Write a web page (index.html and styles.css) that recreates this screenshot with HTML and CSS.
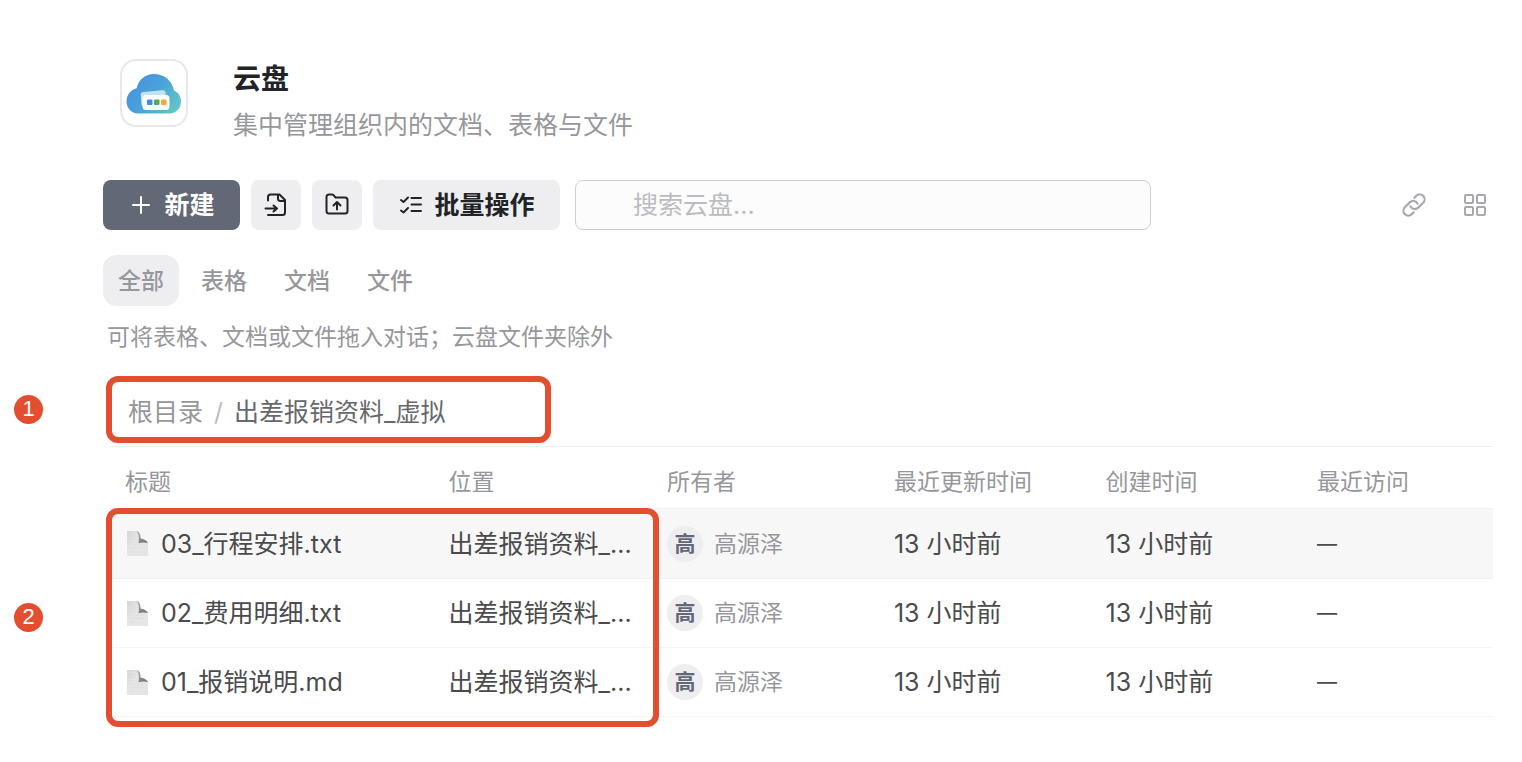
FILE: index.html
```html
<!DOCTYPE html>
<html lang="zh-CN">
<head>
<meta charset="utf-8">
<title>云盘</title>
<link rel="stylesheet" href="styles.css">
</head>
<body>
<svg class="defs" aria-hidden="true">
  <linearGradient id="paper" x1="0" y1="0" x2="1" y2="1"><stop offset="0" stop-color="#d6d6d6"/><stop offset=".4" stop-color="#e6e6e6"/><stop offset="1" stop-color="#e4e4e4"/></linearGradient>
  <linearGradient id="fold" x1="0" y1="0" x2="1" y2="1"><stop offset="0" stop-color="#b8b8b8"/><stop offset=".6" stop-color="#858585"/><stop offset="1" stop-color="#6e6e6e"/></linearGradient>
  <symbol id="file" viewBox="0 0 21 25">
    <path d="M0 0h10.500c2 1.500 2.500 4 2.500 7.500 3.500.3 6.500 1.500 8 4V25H0z" fill="url(#paper)"/>
    <path d="M9.500 0c2.800.6 4.300 3.300 4 7.500 3.200.4 6 1.800 7.500 4.500-2.500-.6-6-.8-9.500.3.900-5.500.4-9.800-2-12.300z" fill="url(#fold)"/>
    <path d="M2 5h7M2 8h7M2 11h8M2 14h16M2 17h15M2 20h5M2 22h4" stroke="#d6d6d6" stroke-width=".4"/>
  </symbol>
</svg>
<main class="page">
  <header class="head">
    <div class="logo">
      <svg viewBox="0 0 56 42" width="56" height="42" aria-hidden="true">
        <defs><linearGradient id="cloud" x1="0" y1=".2" x2="1" y2=".8"><stop offset="0" stop-color="#4590e3"/><stop offset=".5" stop-color="#4ba3d8"/><stop offset="1" stop-color="#62c7c3"/></linearGradient></defs>
        <path d="M12 41.500C5 41.500.500 35.800.500 29.500c0-6.500 4-11.800 10.200-13.300C12.200 7.800 19.500 2 28 2c10 0 18.300 6.500 20 16.500 3.800 1.800 7 5.300 7 11 0 6.800-5 12-11.500 12z" fill="url(#cloud)"/>
        <rect x="15" y="19" width="25" height="15" rx="3" fill="#c4e2f2" transform="rotate(-5 28 26)"/>
        <rect x="16.500" y="23" width="27" height="15" rx="3.500" fill="#fff"/>
        <rect x="21" y="27.500" width="5.500" height="5.500" rx="1" fill="#438be7"/>
        <rect x="28" y="27.500" width="5.500" height="5.500" rx="1" fill="#54a866"/>
        <rect x="35" y="27.500" width="5.500" height="5.500" rx="1" fill="#e9ad42"/>
      </svg>
    </div>
    <div>
      <h1 class="title">云盘</h1>
      <p class="subtitle">集中管理组织内的文档、表格与文件</p>
    </div>
  </header>

  <div class="toolbar">
    <button class="btn primary" type="button">
      <svg viewBox="0 0 18 18" width="18" height="18" aria-hidden="true"><path d="M9 1v16M1 9h16"/></svg>新建
    </button>
    <button class="btn square" type="button" aria-label="导入文件">
      <svg viewBox="0 0 24 24" width="24" height="24" aria-hidden="true"><path d="M4 7.500V4Q4 1.500 6.500 1.500H15.500l5.500 5.500v12.500q0 2.500-2.500 2.500H4M14 1.500V5.500q0 2.500 2.500 2.500h4.500M1.500 15.500h11M9.500 12.500l3.500 3-3.500 3"/></svg>
    </button>
    <button class="btn square" type="button" aria-label="上传文件夹">
      <svg viewBox="0 0 24 24" width="24" height="24" aria-hidden="true"><path d="M1.500 4q0-2.500 2.500-2.500h3q1.300 0 2 1.200L10.500 4.500H20q2.500 0 2.500 2.500v11q0 2.500-2.500 2.500H4q-2.500 0-2.500-2.500zM12 16.500V9.500M8.500 12.500L12 9l3.500 3.500"/></svg>
    </button>
    <button class="btn batch" type="button">
      <svg viewBox="0 0 22 18" width="22" height="18" aria-hidden="true"><path d="M11.500 2h9.500M11.500 8.500h9.500M11.500 15h9.500M1 4l2.500 2L8 1.500M1 14.500l2.500 2L8 12"/></svg>批量操作
    </button>
    <input class="search" type="search" placeholder="搜索云盘..." aria-label="搜索云盘">
    <div class="views">
      <button class="icon" type="button" aria-label="复制链接">
        <svg viewBox="0 0 24 24" width="26" height="26" aria-hidden="true"><path d="M13.190 8.688a4.500 4.500 0 0 1 1.242 7.244l-4.500 4.500a4.500 4.500 0 0 1-6.364-6.364l1.757-1.757m13.350-.622 1.757-1.757a4.500 4.500 0 0 0-6.364-6.364l-4.500 4.500a4.500 4.500 0 0 0 1.242 7.244" transform="matrix(0 1 1 0 0 0)"/></svg>
      </button>
      <button class="icon grid" type="button" aria-label="网格视图">
        <svg viewBox="0 0 22 22" width="22" height="22" aria-hidden="true"><rect x="1" y="1" width="8" height="8" rx="1"/><rect x="13" y="1" width="8" height="8" rx="1"/><rect x="1" y="13" width="8" height="8" rx="1"/><rect x="13" y="13" width="8" height="8" rx="1"/></svg>
      </button>
    </div>
  </div>

  <nav class="tabs" aria-label="类型">
    <button class="tab active" type="button">全部</button>
    <button class="tab" type="button">表格</button>
    <button class="tab" type="button">文档</button>
    <button class="tab" type="button">文件</button>
  </nav>
  <p class="hint">可将表格、文档或文件拖入对话；云盘文件夹除外</p>

  <section class="files">
    <nav class="crumbs" aria-label="路径">
      <a class="root" href="#">根目录</a><span class="slash">/</span><span>出差报销资料_虚拟</span>
      <span class="frame frame-crumbs"></span><span class="badge">1</span>
    </nav>
    <div class="list">
      <table class="table">
        <colgroup><col class="c-name"><col class="c-place"><col class="c-owner"><col class="c-time"><col class="c-time"><col></colgroup>
        <thead>
          <tr><th>标题</th><th>位置</th><th>所有者</th><th>最近更新时间</th><th>创建时间</th><th>最近访问</th></tr>
        </thead>
        <tbody>
          <tr class="hover">
            <td><div class="name"><svg width="21" height="25" aria-hidden="true"><use href="#file"/></svg>03_行程安排.txt</div></td>
            <td>出差报销资料_...</td>
            <td><div class="owner"><span class="avatar">高</span>高源泽</div></td>
            <td>13 小时前</td><td>13 小时前</td><td class="none">—</td>
          </tr>
          <tr>
            <td><div class="name"><svg width="21" height="25" aria-hidden="true"><use href="#file"/></svg>02_费用明细.txt</div></td>
            <td>出差报销资料_...</td>
            <td><div class="owner"><span class="avatar">高</span>高源泽</div></td>
            <td>13 小时前</td><td>13 小时前</td><td class="none">—</td>
          </tr>
          <tr>
            <td><div class="name"><svg width="21" height="25" aria-hidden="true"><use href="#file"/></svg>01_报销说明.md</div></td>
            <td>出差报销资料_...</td>
            <td><div class="owner"><span class="avatar">高</span>高源泽</div></td>
            <td>13 小时前</td><td>13 小时前</td><td class="none">—</td>
          </tr>
        </tbody>
      </table>
      <span class="frame frame-rows"></span><span class="badge badge-rows">2</span>
    </div>
  </section>
</main>
</body>
</html>
```
FILE: styles.css
```css
* { box-sizing: border-box; }
body {
  margin: 0;
  background: #fff;
  color: #4b4b4d;
  font-family: Inter, "Noto Sans CJK SC", sans-serif;
  font-size: 25px;
  line-height: 36px;
}
button, input { font: inherit; }
button { border: 0; padding: 0; cursor: pointer; }
svg { fill: none; flex: none; }
.defs { position: absolute; width: 0; height: 0; }
.page { padding: 59px 29px 40px 103px; }

.head { display: flex; gap: 45px; padding-left: 17px; }
.logo {
  display: grid;
  place-items: center;
  width: 68px;
  height: 68px;
  border: 2px solid #e8e8ec;
  border-radius: 16px;
}
.title { margin: 0; font-size: 28px; line-height: 40px; font-weight: 700; color: #222327; }
.subtitle { margin: 8px 0 0; color: #96979b; }

.toolbar { display: flex; align-items: center; margin-top: 37px; }
.btn {
  display: flex;
  align-items: center;
  justify-content: center;
  height: 50px;
  margin-right: 11px;
  border-radius: 8px;
  background: #eeeef0;
  color: #222327;
  font-weight: 700;
}
.btn svg { stroke: currentColor; stroke-width: 2; stroke-linecap: round; stroke-linejoin: round; }
.primary { width: 137px; padding-left: 4px; gap: 14px; background: #636877; color: #fff; }
.square { width: 50px; }
.batch { width: 187px; padding-left: 2px; gap: 12px; margin-right: 15px; }
.search {
  flex: 0 1 576px;
  min-width: 0;
  height: 50px;
  padding: 0 57px;
  border: 1px solid #cfcfd1;
  border-radius: 8px;
  background: #fcfcfc;
  color: #4b4b4d;
}
.search::placeholder { color: #bbbcbf; opacity: 1; }
.views { display: flex; align-items: center; gap: 37px; margin-left: auto; padding-right: 7px; }
.icon { display: flex; background: none; color: #a8a9ae; }
.icon svg { stroke: currentColor; stroke-width: 2; stroke-linecap: round; stroke-linejoin: round; }

.tabs { display: flex; gap: 7px; margin-top: 25px; font-size: 23px; }
.tab {
  height: 51px;
  padding: 0 15px;
  border-radius: 14px;
  background: none;
  color: #96979b;
  font-weight: 500;
}
.tab.active { background: #eeeef0; }
.hint { margin: 13px 0 0; padding-left: 4px; font-size: 23px; color: #96979b; }

.files { margin: 21px 0 0 7px; }
.crumbs {
  position: relative;
  display: flex;
  align-items: center;
  height: 71px;
  padding: 2px 0 0 18px;
  border-bottom: 1px solid #f0f0f0;
  color: #67686e;
}
.root { color: #96979b; text-decoration: none; }
.slash { margin: 0 11px; color: #bbbcbf; }
.list { position: relative; }
.frame { position: absolute; border: 6px solid #e34d30; border-radius: 12px; pointer-events: none; }
.frame-crumbs { left: -4px; top: 0; width: 445px; height: 67px; }
.frame-rows { left: -4px; top: 61px; bottom: -10px; width: 553px; }
.badge {
  position: absolute;
  left: -96px;
  top: 19px;
  width: 29px;
  height: 29px;
  border-radius: 50%;
  background: #e34d30;
  color: #fff;
  font: 22px/28px "Liberation Sans", sans-serif;
  text-align: center;
}
.badge-rows { top: 156px; }

.table { width: 100%; table-layout: fixed; border-collapse: separate; border-spacing: 0; }
.c-name { width: 23.4%; }
.c-place { width: 15.8%; }
.c-owner { width: 16.4%; }
.c-time { width: 15.3%; }
th, td { padding: 0 15px; border-bottom: 1px solid #f5f5f5; text-align: left; white-space: nowrap; }
th { height: 62px; padding-top: 8px; border-color: #f0f0f0; font-size: 23px; font-weight: 400; color: #96979b; }
td { height: 69px; }
.hover td { height: 70px; background: #f7f7f7; border-color: #f0f0f0; }
.table .none { font-size: 20px; }
.name { display: flex; align-items: center; gap: 13px; padding-left: 2px; }
.owner { display: flex; align-items: center; gap: 11px; font-size: 23px; color: #96979b; }
.avatar {
  width: 36px;
  height: 36px;
  border-radius: 50%;
  background: #eeeef0;
  color: #636877;
  font-size: 21px;
  font-weight: 700;
  text-align: center;
}
```
